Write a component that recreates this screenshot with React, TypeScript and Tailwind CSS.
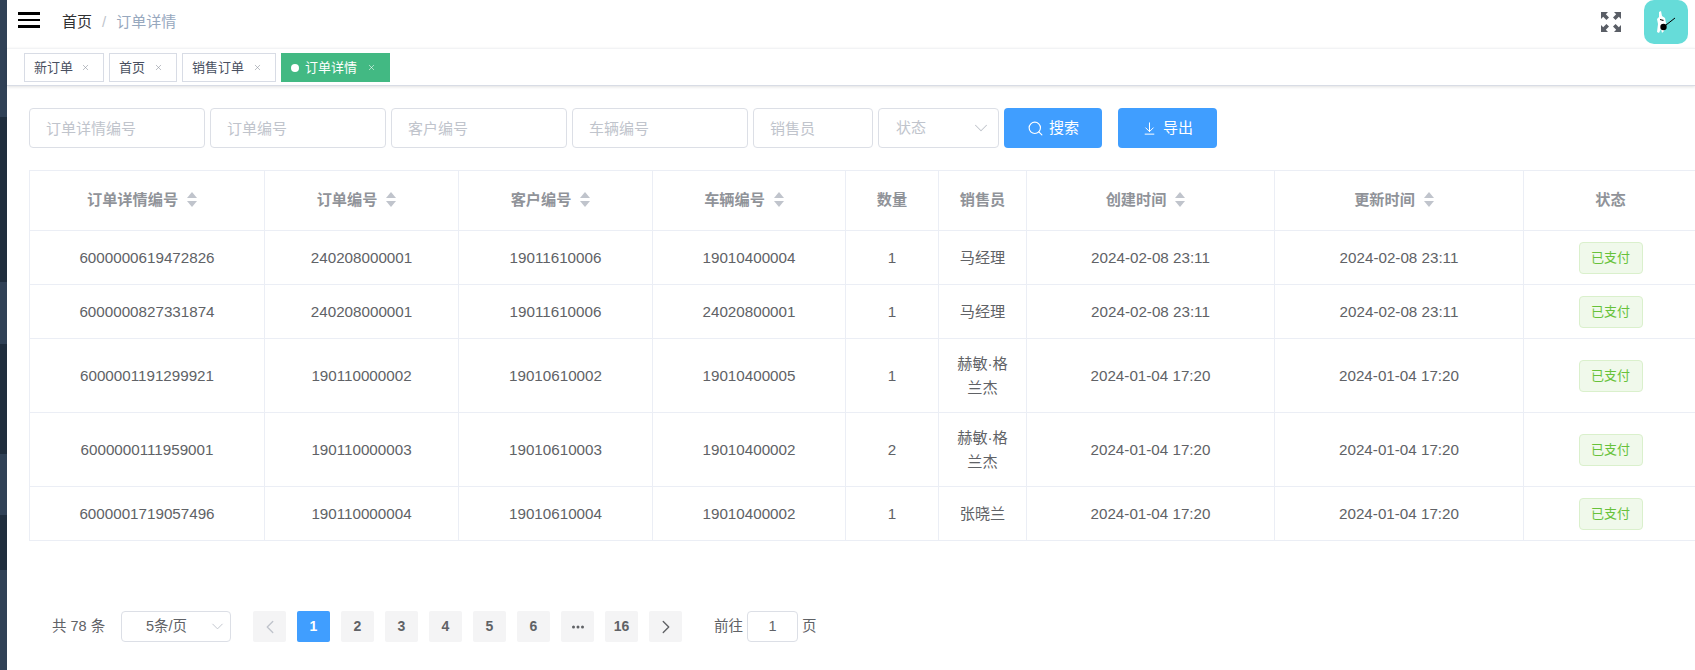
import React from 'react';
import { ArrowDownToLine, ChevronDown, ChevronLeft, ChevronRight, Search, X } from 'lucide-react';

const rows = [
  { id: '6000000619472826', order: '240208000001', customer: '19011610006', car: '19010400004', qty: 1, sales: '马经理', time: '2024-02-08 23:11' },
  { id: '6000000827331874', order: '240208000001', customer: '19011610006', car: '24020800001', qty: 1, sales: '马经理', time: '2024-02-08 23:11' },
  { id: '6000001191299921', order: '190110000002', customer: '19010610002', car: '19010400005', qty: 1, sales: '赫敏·格兰杰', time: '2024-01-04 17:20' },
  { id: '6000000111959001', order: '190110000003', customer: '19010610003', car: '19010400002', qty: 2, sales: '赫敏·格兰杰', time: '2024-01-04 17:20' },
  { id: '6000001719057496', order: '190110000004', customer: '19010610004', car: '19010400002', qty: 1, sales: '张晓兰', time: '2024-01-04 17:20' },
];

const SortCaret = () => (
  <svg width="10" height="15" viewBox="0 0 10 15" className="mr-[10px] ml-[9px] shrink-0">
    <path d="M5 0 L10 6 L0 6 Z" fill="#c0c4cc" />
    <path d="M5 15 L10 9 L0 9 Z" fill="#c0c4cc" />
  </svg>
);

const Th = ({ label, sortable, className }: { label: string; sortable?: boolean; className: string }) => (
  <th className={`border-r border-b border-[#ebeef5] h-[60px] p-0 pb-[1px] text-[15.2px] font-bold text-[#909399] ${className}`}>
    <div className="flex items-center justify-center">
      <span>{label}</span>
      {sortable && <SortCaret />}
    </div>
  </th>
);

const Td = ({ children }: { children: React.ReactNode }) => (
  <td className="border-r border-b border-[#ebeef5] h-[54px] py-[12.5px] px-[13px] text-center text-[15.2px] leading-[24px] text-[#606266]">
    {children}
  </td>
);

const FilterInput = ({ placeholder, className }: { placeholder: string; className: string }) => (
  <input
    placeholder={placeholder}
    className={`h-[40px] rounded-[4px] border border-[#dcdfe6] bg-white px-[16px] text-[15px] outline-none placeholder:text-[#c0c4cc] ${className}`}
  />
);

const Tag = ({ label, active, className }: { label: string; active?: boolean; className: string }) => (
  <div
    className={`flex h-[29px] items-center border pl-[8px] text-[13px] ${className} ${
      active ? 'border-[#42b983] bg-[#42b983] text-white' : 'border-[#d8dce5] bg-white text-[#495060]'
    }`}
  >
    {active && <span className="mr-[6px] ml-[1px] h-[8px] w-[8px] rounded-full bg-white" />}
    <span>{label}</span>
    <X size={9} strokeWidth={1.5} className={`ml-auto mr-[13px] ${active ? 'text-white' : 'text-[#8a8f99]'}`} />
  </div>
);

const PageBtn = ({ children, active }: { children: React.ReactNode; active?: boolean }) => (
  <div
    className={`flex h-[31px] w-[33px] items-center justify-center rounded-[2px] text-[14px] font-bold ${
      active ? 'bg-[#409eff] text-white' : 'bg-[#f4f4f5] text-[#606266]'
    }`}
  >
    {children}
  </div>
);

const FullscreenIcon = () => (
  <svg width="20" height="20" viewBox="0 0 20 20" fill="#5a5e66">
    <path d="M0 0h7L4.8 2.2 8 5.4 5.4 8 2.2 4.8 0 7Z" />
    <path d="M20 0h-7l2.200 2.200L12 5.400 14.600 8l3.200-3.200L20 7Z" />
    <path d="M0 20h7l-2.200-2.200L8 14.600 5.400 12l-3.200 3.200L0 13Z" />
    <path d="M20 20h-7l2.200-2.200L12 14.600 14.600 12l3.200 3.200L20 13Z" />
  </svg>
);

const Avatar = () => (
  <div className="flex h-[44px] w-[44px] items-center justify-center rounded-[10px] bg-[#66dcd9]">
    <svg width="44" height="44" viewBox="0 0 44 44">
      <path d="M15 12 L17 11 L18 16 L21 18 L22 23 L20 31 L18 33 L17 29 L15 33 L13 32 L14 24 L13 19 L15 17 Z" fill="#fff" />
      <path d="M16 19 L20 20 L19 21 L16 20 Z" fill="#111" />
      <circle cx="19.500" cy="27" r="3.200" fill="#000" />
      <path d="M22 25 L31 18" stroke="#000" strokeWidth="1" />
    </svg>
  </div>
);

export default function App() {
  return (
    <div className="flex h-[670px] w-full overflow-hidden bg-white font-['Liberation_Sans','Noto_Sans_CJK_SC',sans-serif]">
      {/* collapsed sidebar */}
      <div className="flex w-[7px] shrink-0 flex-col bg-[#304156]">
        <div className="h-[117px] bg-[#304156]" />
        <div className="h-[165px] bg-[#1f2d3d]" />
        <div className="h-[62px] bg-[#304156]" />
        <div className="h-[110px] bg-[#1f2d3d]" />
        <div className="h-[61px] bg-[#304156]" />
        <div className="h-[55px] bg-[#1f2d3d]" />
      </div>

      <div className="flex min-w-0 flex-1 flex-col">
        {/* navbar */}
        <div className="flex h-[48px] shrink-0 items-center pb-[4px] pl-[11px]">
          <div className="-mt-[4px] flex w-[22px] flex-col gap-[4px]">
            <div className="h-[2.5px] bg-black" />
            <div className="h-[2.5px] bg-black" />
            <div className="h-[2.5px] bg-black" />
          </div>
          <div className="ml-[22px] flex items-center text-[15px]">
            <span className="text-[#303133]">首页</span>
            <span className="mx-[10px] text-[#c0c4cc]">/</span>
            <span className="text-[#97a8be]">订单详情</span>
          </div>
          <div className="ml-auto flex items-center gap-[23px] pr-[7px]">
            <FullscreenIcon />
            <Avatar />
          </div>
        </div>

        {/* tags view */}
        <div className="flex h-[38px] shrink-0 items-start gap-[5px] border-t border-[#f2f3f5] border-b border-b-[#d8dce5] pt-[4px] pl-[17px] shadow-[0_1px_3px_0_rgba(0,0,0,0.12)]">
          <Tag label="新订单" className="w-[80px] pl-[9px]" />
          <Tag label="首页" className="w-[68px] pl-[9px]" />
          <Tag label="销售订单" className="w-[94px] pl-[9px]" />
          <Tag label="订单详情" active className="w-[109px]" />
        </div>

        {/* filters */}
        <div className="mt-[22px] flex shrink-0 items-center gap-[5px] pl-[22px]">
          <FilterInput placeholder="订单详情编号" className="w-[176px]" />
          <FilterInput placeholder="订单编号" className="w-[176px]" />
          <FilterInput placeholder="客户编号" className="w-[176px]" />
          <FilterInput placeholder="车辆编号" className="w-[176px]" />
          <FilterInput placeholder="销售员" className="w-[120px]" />
          <div className="flex h-[40px] w-[121px] items-center justify-between rounded-[4px] border border-[#dcdfe6] pr-[6px] pl-[17px] text-[15px] text-[#c0c4cc]">
            <span>状态</span>
            <ChevronDown size={22} strokeWidth={1.1} />
          </div>
          <button className="flex h-[40px] w-[98px] items-center justify-center gap-[5px] rounded-[4px] bg-[#409eff] text-[15px] text-white">
            <Search size={17} strokeWidth={1.6} />
            <span>搜索</span>
          </button>
          <button className="ml-[11px] flex h-[40px] w-[99px] items-center justify-center gap-[6px] rounded-[4px] bg-[#409eff] text-[15px] text-white">
            <ArrowDownToLine size={15} strokeWidth={1.6} />
            <span>导出</span>
          </button>
        </div>

        {/* table */}
        <div className="mt-[22px] shrink-0 pl-[22px]">
          <table className="w-[1668px] table-fixed border-collapse border-t border-l border-[#ebeef5]">
            <thead>
              <tr>
                <Th label="订单详情编号" sortable className="w-[235px]" />
                <Th label="订单编号" sortable className="w-[194px]" />
                <Th label="客户编号" sortable className="w-[194px]" />
                <Th label="车辆编号" sortable className="w-[193px]" />
                <Th label="数量" className="w-[93px]" />
                <Th label="销售员" className="w-[88px]" />
                <Th label="创建时间" sortable className="w-[248px]" />
                <Th label="更新时间" sortable className="w-[249px]" />
                <Th label="状态" className="w-[174px]" />
              </tr>
            </thead>
            <tbody>
              {rows.map((row) => (
                <tr key={row.id}>
                  <Td>{row.id}</Td>
                  <Td>{row.order}</Td>
                  <Td>{row.customer}</Td>
                  <Td>{row.car}</Td>
                  <Td>{row.qty}</Td>
                  <Td>{row.sales}</Td>
                  <Td>{row.time}</Td>
                  <Td>{row.time}</Td>
                  <td className="border-r border-b border-[#ebeef5] p-0 text-center">
                    <span className="inline-flex h-[32px] w-[64px] items-center justify-center rounded-[4px] border border-[#daf0cc] bg-[#f0f9eb] text-[13px] text-[#67c23a]">
                      已支付
                    </span>
                  </td>
                </tr>
              ))}
            </tbody>
          </table>
        </div>

        {/* pagination */}
        <div className="mt-[70px] flex shrink-0 items-center pl-[45px] text-[14.500px] text-[#606266]">
          <span className="w-[69px]">共 78 条</span>
          <div className="flex h-[31px] w-[110px] items-center rounded-[4px] border border-[#dcdfe6] pr-[3px] pl-[24px]">
            <span>5条/页</span>
            <ChevronDown size={19} strokeWidth={1.2} className="ml-auto text-[#c0c4cc]" />
          </div>
          <div className="ml-[22px] flex items-center gap-[11px]">
            <PageBtn>
              <ChevronLeft size={22} strokeWidth={1.5} className="text-[#c0c4cc]" />
            </PageBtn>
            <PageBtn active>1</PageBtn>
            <PageBtn>2</PageBtn>
            <PageBtn>3</PageBtn>
            <PageBtn>4</PageBtn>
            <PageBtn>5</PageBtn>
            <PageBtn>6</PageBtn>
            <PageBtn>
              <svg width="12" height="4" viewBox="0 0 12 4" fill="#606266">
                <circle cx="1.500" cy="2" r="1.500" />
                <circle cx="6" cy="2" r="1.500" />
                <circle cx="10.500" cy="2" r="1.500" />
              </svg>
            </PageBtn>
            <PageBtn>16</PageBtn>
            <PageBtn>
              <ChevronRight size={22} strokeWidth={1.5} />
            </PageBtn>
          </div>
          <span className="ml-[32px]">前往</span>
          <div className="mx-[4px] flex h-[31px] w-[51px] items-center justify-center rounded-[4px] border border-[#dcdfe6]">1</div>
          <span>页</span>
        </div>
      </div>
    </div>
  );
}
